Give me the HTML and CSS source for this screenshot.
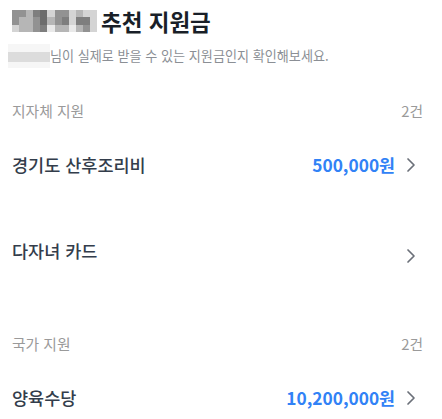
FILE: index.html
```html
<!DOCTYPE html>
<html lang="ko">
<head>
<meta charset="utf-8">
<title>추천 지원금</title>
<link rel="stylesheet" href="styles.css">
</head>
<body>
<header class="intro">
  <h1 class="title">
    <span class="mosaic" aria-hidden="true">
      <i class="m3"></i><i class="m3"></i><i class="m2"></i><i class="m4"></i><i class="m5"></i><i class="m1"></i><i class="m3"></i><i class="m3"></i><i class="m1"></i><i class="m2"></i><i class="m1"></i><i class="m1"></i>
      <i class="m3"></i><i class="m2"></i><i class="m2"></i><i class="m3"></i><i class="m5"></i><i class="m2"></i><i class="m3"></i><i class="m4"></i><i class="m1"></i><i class="m4"></i><i class="m4"></i><i class="m1"></i>
      <i class="m1"></i><i class="m2"></i><i class="m2"></i><i class="m3"></i><i class="m4"></i><i class="m0"></i><i class="m2"></i><i class="m2"></i><i class="m0"></i><i class="m2"></i><i class="m3"></i><i class="m1"></i>
    </span>
    <span class="title-text">추천 지원금</span>
  </h1>
  <p class="subtitle"><span class="name-blur" aria-hidden="true"></span><span>님이 실제로 받을 수 있는 지원금인지 확인해보세요.</span></p>
</header>

<main class="sections">
  <section class="section">
    <div class="section-head"><span>지자체 지원</span><span>2건</span></div>
    <ul class="items">
      <li class="item">
        <span class="item-name">경기도 산후조리비</span>
        <span class="item-right"><span class="amount">500,000원</span><svg class="chev" viewBox="0 0 24 24" width="24" height="24"><path d="M9 6l6 6-6 6" fill="none" stroke="#6b7079" stroke-width="1.7" stroke-linecap="round" stroke-linejoin="round"/></svg></span>
      </li>
      <li class="item">
        <span class="item-name">다자녀 카드</span>
        <span class="item-right"><svg class="chev chev-low" viewBox="0 0 24 24" width="24" height="24"><path d="M9 6l6 6-6 6" fill="none" stroke="#6b7079" stroke-width="1.7" stroke-linecap="round" stroke-linejoin="round"/></svg></span>
      </li>
    </ul>
  </section>

  <section class="section">
    <div class="section-head"><span>국가 지원</span><span>2건</span></div>
    <ul class="items">
      <li class="item">
        <span class="item-name">양육수당</span>
        <span class="item-right"><span class="amount">10,200,000원</span><svg class="chev" viewBox="0 0 24 24" width="24" height="24"><path d="M9 6l6 6-6 6" fill="none" stroke="#6b7079" stroke-width="1.7" stroke-linecap="round" stroke-linejoin="round"/></svg></span>
      </li>
    </ul>
  </section>
</main>
</body>
</html>
```

FILE: styles.css
```css
* { box-sizing: border-box; }

body {
  margin: 0;
  background: #ffffff;
  font-family: "Noto Sans CJK KR", "Noto Sans", sans-serif;
  color: #333d4b;
}

.intro {
  padding: 6px 12px 0 12px;
}

.title {
  margin: 0;
  display: flex;
  align-items: center;
  gap: 4px;
  height: 30px;
  font-size: 22.5px;
  font-weight: 700;
  color: #191f28;
  line-height: 30px;
}

.mosaic {
  display: grid;
  grid-template-columns: repeat(12, 7.1px);
  grid-template-rows: repeat(3, 7.4px);
  width: 85px;
  height: 22px;
}

.mosaic i { display: block; }
.m0 { background: #e9e9e9; }
.m1 { background: #d4d4d4; }
.m2 { background: #b6b6b6; }
.m3 { background: #929292; }
.m4 { background: #7e7e7e; }
.m5 { background: #6c6c6c; }

.subtitle {
  margin: 10px 0 0 -4px;
  display: flex;
  align-items: center;
  height: 20px;
  font-size: 13.1px;
  line-height: 20px;
  color: #8b8f95;
}

.name-blur {
  width: 42px;
  height: 24px;
  background: linear-gradient(to bottom, #f6f6f6 0 8px, #dcdcdc 8px 18px, #f6f6f6 18px 24px);
}

.sections {
  display: flex;
  flex-direction: column;
  gap: 71px;
  margin-top: 35px;
  padding: 0 19px 0 12px;
}

.section-head {
  display: flex;
  justify-content: space-between;
  height: 20px;
  line-height: 20px;
  font-size: 14.8px;
  color: #9a9a9a;
  margin-bottom: 32px;
}

.items {
  list-style: none;
  margin: 0;
  padding: 0;
  display: flex;
  flex-direction: column;
  gap: 62px;
}

.item {
  display: flex;
  justify-content: space-between;
  align-items: center;
  height: 24px;
}

.item-name {
  font-size: 17.5px;
  font-weight: 500;
  color: #333d4b;
  line-height: 24px;
}

.item-right {
  display: flex;
  align-items: center;
  gap: 4px;
}

.amount {
  font-size: 17.3px;
  font-weight: 600;
  color: #3182f6;
  line-height: 24px;
}

.chev {
  display: block;
  width: 24px;
  height: 24px;
}

.chev-low {
  margin-top: 10px;
}
```
